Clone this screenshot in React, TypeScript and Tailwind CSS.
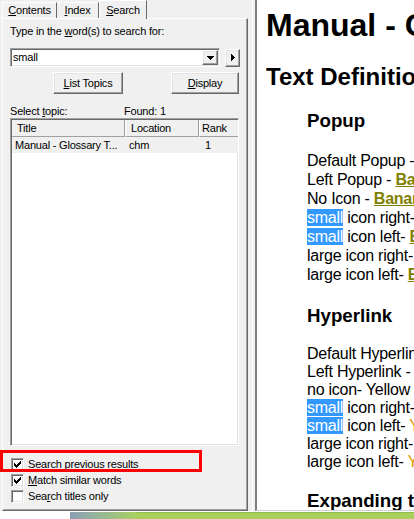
import React from "react";

const UI = "font-['Liberation_Sans',Arial,sans-serif] text-[11px] leading-[13px] tracking-[-0.2px] text-black";
const RAISED =
  "bg-[#f0f0f0] border border-t-white border-l-white border-r-[#696969] border-b-[#696969] shadow-[inset_-1px_-1px_0_#a0a0a0,inset_1px_1px_0_#e3e3e3]";
const SUNKEN =
  "border border-t-[#a0a0a0] border-l-[#a0a0a0] border-r-white border-b-white shadow-[inset_1px_1px_0_#696969,inset_-1px_-1px_0_#e3e3e3]";

function Check({ checked }: { checked?: boolean }) {
  return (
    <span className={`w-[13px] h-[13px] bg-white flex items-center justify-center shrink-0 ${SUNKEN}`}>
      {checked && (
        <svg width="7" height="7" viewBox="0 0 7 7" shapeRendering="crispEdges">
          <polygon points="0,2 2,4 7,-1 7,2 2,7 0,5" fill="#000" />
        </svg>
      )}
    </span>
  );
}

function CheckRow({ checked, children }: { checked?: boolean; children: React.ReactNode }) {
  return (
    <div className="h-[16px] flex items-center pl-[8px] gap-[4px]">
      <Check checked={checked} />
      <span>{children}</span>
    </div>
  );
}

function Banana() {
  return <b className="underline text-[#808000]">Banana</b>;
}

function Yellow() {
  return <span className="text-[#e09a00]">Yellow</span>;
}

function Sel() {
  return <span className="bg-[#3399ff] text-white">small</span>;
}

export default function App() {
  return (
    <div className="w-[414px] h-[519px] overflow-hidden bg-white flex flex-col relative">
      <div className="h-[511px] flex">
        {/* Left: tabs panel */}
        <div className={`w-[252px] bg-[#f0f0f0] pl-[2px] pr-[4px] flex flex-col ${UI}`}>
          {/* tab strip */}
          <div className="h-[18px] flex items-end">
            <div className="h-[16px] w-[55px] border-t border-l border-white border-r border-r-[#696969] text-center pt-[1px]">
              <u>C</u>ontents
            </div>
            <div className="h-[16px] w-[42px] border-t border-white border-r border-r-[#696969] text-center pt-[1px]">
              <u>I</u>ndex
            </div>
            <div className="h-[19px] w-[48px] -mb-px relative z-10 bg-[#f0f0f0] border-t border-l border-white border-r border-r-[#696969] text-center pt-[3px]">
              <u>S</u>earch
            </div>
          </div>

          {/* tab page */}
          <div className="flex-1 flex flex-col border border-t-white border-l-white border-r-[#696969] border-b-[#696969] shadow-[inset_-1px_-1px_0_#a0a0a0] pl-[7px] pt-[6px]">
            <div>
              Type in the <u>w</u>ord(s) to search for:
            </div>

            <div className="mt-[10px] flex items-center">
              <div className={`w-[210px] h-[19px] bg-white flex items-center justify-between ${SUNKEN}`}>
                <span className="pl-[2px]">small</span>
                <div className={`w-[16px] h-[15px] mr-px flex items-center justify-center ${RAISED}`}>
                  <svg width="7" height="4" viewBox="0 0 7 4" shapeRendering="crispEdges">
                    <polygon points="0,0 7,0 3.5,4" fill="#000" />
                  </svg>
                </div>
              </div>
              <div className={`ml-[5px] w-[15px] h-[18px] flex items-center justify-center ${RAISED}`}>
                <svg width="4" height="7" viewBox="0 0 4 7" shapeRendering="crispEdges">
                  <polygon points="0,0 4,3.5 0,7" fill="#000" />
                </svg>
              </div>
            </div>

            <div className="mt-[5px] flex">
              <div className={`ml-[43px] w-[70px] h-[22px] flex items-center justify-center ${RAISED}`}>
                <span>
                  <u>L</u>ist Topics
                </span>
              </div>
              <div className={`ml-[48px] w-[68px] h-[22px] flex items-center justify-center ${RAISED}`}>
                <span>
                  <u>D</u>isplay
                </span>
              </div>
            </div>

            <div className="mt-[11px] flex">
              <span className="w-[114px]">
                Select <u>t</u>opic:
              </span>
              <span>Found: 1</span>
            </div>

            {/* list view */}
            <div className={`flex-1 w-[229px] bg-white overflow-hidden ${SUNKEN}`}>
              <div className="flex h-[17px] ml-px mt-px">
                <div className="w-[113px] shrink-0 pl-[5px] flex items-center border-r border-r-[#a0a0a0] border-b border-b-[#a0a0a0] bg-[#f0f0f0]">
                  Title
                </div>
                <div className="w-[74px] shrink-0 pl-[5px] flex items-center border-r border-r-[#a0a0a0] border-b border-b-[#a0a0a0] bg-[#f0f0f0] border-l border-l-white">
                  Location
                </div>
                <div className="flex-1 pl-[2px] flex items-center border-b border-b-[#a0a0a0] bg-[#f0f0f0] border-l border-l-white">
                  Rank
                </div>
              </div>
              <div className="flex h-[16px] items-center ml-px bg-[#f0f0f0]">
                <div className="w-[113px] shrink-0 pl-[3px]">Manual - Glossary T...</div>
                <div className="w-[74px] shrink-0 pl-[4px]">chm</div>
                <div className="flex-1 pl-[6px]">1</div>
              </div>
            </div>

            {/* options */}
            <div className="pt-[10px] pb-[6px] -ml-[7px]">
              <CheckRow checked>
                Search previous res<u>u</u>lts
              </CheckRow>
              <CheckRow checked>
                <u>M</u>atch similar words
              </CheckRow>
              <CheckRow>
                Sea<u>r</u>ch titles only
              </CheckRow>
            </div>
          </div>
        </div>

        {/* splitter */}
        <div className="w-[3px] bg-[#f0f0f0] border-l border-white" />

        {/* Right: topic content */}
        <div className="flex-1 bg-white border-l-2 border-[#808080] border-b border-b-[#d0d0d0] overflow-hidden font-['Liberation_Sans',Arial,sans-serif] text-black whitespace-nowrap pt-[9px]">
          <h1 className="text-[32px] leading-[32px] font-bold pl-[9px]">Manual - Glossary Terms</h1>
          <h2 className="mt-[24px] text-[24px] leading-[24px] font-bold pl-[9px]">Text Definitions</h2>
          <div className="pl-[50px]">
            <h3 className="mt-[22px] text-[18.72px] leading-[19px] font-bold">Popup</h3>
            <div className="mt-[21px] text-[16px] leading-[19px] tracking-[-0.25px]">
              <div>
                Default Popup - <Banana />
              </div>
              <div>
                Left Popup - <Banana />
              </div>
              <div>
                No Icon - <Banana />
              </div>
              <div>
                <Sel /> icon right- <Banana />
              </div>
              <div>
                <Sel /> icon left- <Banana />
              </div>
              <div>
                large icon right- <Banana />
              </div>
              <div>
                large icon left- <Banana />
              </div>
            </div>

            <h3 className="mt-[22px] text-[18.72px] leading-[19px] font-bold">Hyperlink</h3>
            <div className="mt-[20px] text-[16px] leading-[18px] tracking-[-0.25px]">
              <div>
                Default Hyperlink - <Yellow />
              </div>
              <div>
                Left Hyperlink - <Yellow />
              </div>
              <div>no icon- Yellow</div>
              <div>
                <Sel /> icon right- <Yellow />
              </div>
              <div>
                <Sel /> icon left- <Yellow />
              </div>
              <div>
                large icon right- <Yellow />
              </div>
              <div>
                large icon left- <Yellow />
              </div>
            </div>

            <h3 className="mt-[20px] text-[18.72px] leading-[19px] font-bold">Expanding text</h3>
          </div>
        </div>
      </div>

      {/* desktop strip behind the window */}
      <div className="h-[8px] flex border-t border-white">
        <div className="w-[70px] bg-white" />
        <div className="w-[67px] bg-gradient-to-r from-[#8d9fb5] to-[#a9cf5c]" />
        <div className="flex-1 bg-[#a9cf5c] border-t border-[#93bd45]" />
      </div>

      {/* annotation */}
      <div className="absolute left-0 top-[450px] w-[202px] h-[22px] border-[3px] border-[#ff0000]" />
    </div>
  );
}
